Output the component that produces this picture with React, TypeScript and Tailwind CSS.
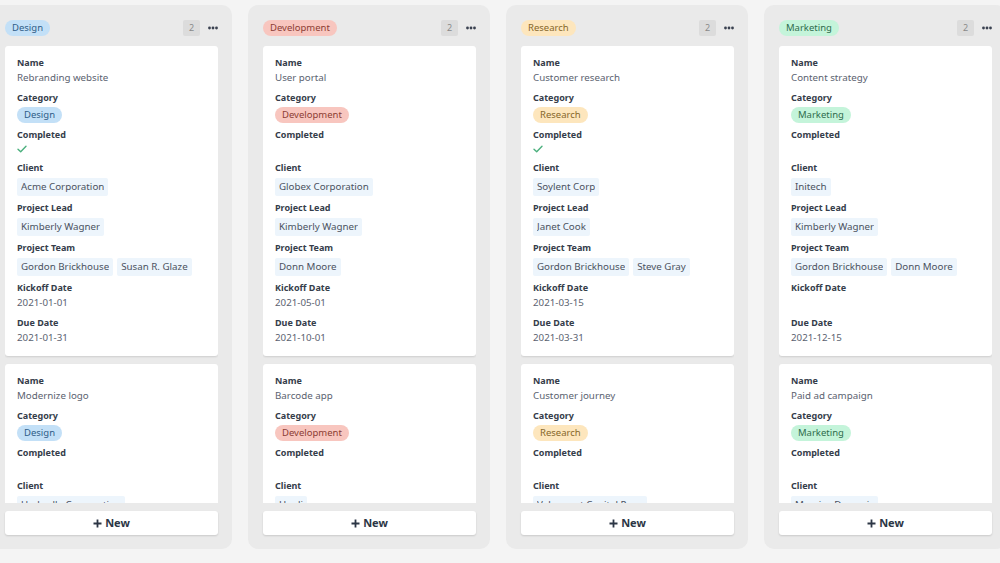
import React from 'react'

type Tone = 'blue' | 'red' | 'amber' | 'green'

interface Project {
    name: string
    completed: boolean
    client: string
    lead?: string
    team?: string[]
    kickoff?: string
    due?: string
}

interface Group {
    title: string
    tone: Tone
    projects: Project[]
}

const pillTone: Record<Tone, string> = {
    blue: 'bg-[#c3e0f7] text-[#2f5d87]',
    red: 'bg-[#f8c6bf] text-[#8c3d33]',
    amber: 'bg-[#fde6bd] text-[#86662a]',
    green: 'bg-[#c4f4da] text-[#2e6c4d]',
}

const groups: Group[] = [
    {
        title: 'Design',
        tone: 'blue',
        projects: [
            {
                name: 'Rebranding website',
                completed: true,
                client: 'Acme Corporation',
                lead: 'Kimberly Wagner',
                team: ['Gordon Brickhouse', 'Susan R. Glaze'],
                kickoff: '2021-01-01',
                due: '2021-01-31',
            },
            { name: 'Modernize logo', completed: false, client: 'Umbrella Corporation' },
        ],
    },
    {
        title: 'Development',
        tone: 'red',
        projects: [
            {
                name: 'User portal',
                completed: false,
                client: 'Globex Corporation',
                lead: 'Kimberly Wagner',
                team: ['Donn Moore'],
                kickoff: '2021-05-01',
                due: '2021-10-01',
            },
            { name: 'Barcode app', completed: false, client: 'Hooli' },
        ],
    },
    {
        title: 'Research',
        tone: 'amber',
        projects: [
            {
                name: 'Customer research',
                completed: true,
                client: 'Soylent Corp',
                lead: 'Janet Cook',
                team: ['Gordon Brickhouse', 'Steve Gray'],
                kickoff: '2021-03-15',
                due: '2021-03-31',
            },
            { name: 'Customer journey', completed: false, client: 'Vehement Capital Partners' },
        ],
    },
    {
        title: 'Marketing',
        tone: 'green',
        projects: [
            {
                name: 'Content strategy',
                completed: false,
                client: 'Initech',
                lead: 'Kimberly Wagner',
                team: ['Gordon Brickhouse', 'Donn Moore'],
                due: '2021-12-15',
            },
            { name: 'Paid ad campaign', completed: false, client: 'Massive Dynamic' },
        ],
    },
]

function Pill({ tone, children }: { tone: Tone; children: React.ReactNode }) {
    return (
        <span className={`inline-flex h-[16px] items-center rounded-full px-[7px] text-[9.5px] leading-none ${pillTone[tone]}`}>
            {children}
        </span>
    )
}

function Chip({ children }: { children: React.ReactNode }) {
    return (
        <span className="inline-flex h-[18px] max-w-[114px] items-center rounded-[2px] bg-[#edf5fc] px-[4px] text-[9.75px] text-[#4b5261]">
            <span className="truncate">{children}</span>
        </span>
    )
}

function Field({ label, children }: { label: string; children?: React.ReactNode }) {
    return (
        <div className="flex flex-col">
            <div className="h-[14px] text-[9px] font-bold leading-[14px] text-[#353d4a]">{label}</div>
            {children}
        </div>
    )
}

function Text({ children }: { children?: React.ReactNode }) {
    return <div className="h-[16px] text-[9.75px] leading-[16px] text-[#5b6270]">{children}</div>
}

function Check() {
    return (
        <div className="flex h-[14px] items-center">
            <svg width="10" height="8" viewBox="0 0 10 8" fill="none">
                <path d="M1 4.2 3.7 6.8 9 1.2" stroke="#4cb07e" strokeWidth="1.4" strokeLinecap="round" strokeLinejoin="round" />
            </svg>
        </div>
    )
}

function Card({ project, tone, category }: { project: Project; tone: Tone; category: string }) {
    return (
        <div className="flex shrink-0 flex-col gap-[5px] rounded-[3px] bg-white px-[12px] pt-[10px] pb-[10px] shadow-[0_1px_2px_rgba(0,0,0,0.12)]">
            <Field label="Name">
                <Text>{project.name}</Text>
            </Field>
            <Field label="Category">
                <div className="mt-[2px] flex">
                    <Pill tone={tone}>{category}</Pill>
                </div>
            </Field>
            <Field label="Completed">
                {project.completed ? <Check /> : <div className="h-[14px]" />}
            </Field>
            <Field label="Client">
                <div className="mt-[3px] flex">
                    <Chip>{project.client}</Chip>
                </div>
            </Field>
            <Field label="Project Lead">
                <div className="mt-[3px] flex">
                    <Chip>{project.lead}</Chip>
                </div>
            </Field>
            <Field label="Project Team">
                <div className="mt-[3px] flex gap-[4px]">
                    {project.team?.map(t => (
                        <Chip key={t}>{t}</Chip>
                    ))}
                </div>
            </Field>
            <Field label="Kickoff Date">
                <Text>{project.kickoff}</Text>
            </Field>
            <Field label="Due Date">
                <Text>{project.due}</Text>
            </Field>
        </div>
    )
}

function Column({ group }: { group: Group }) {
    return (
        <div className="mt-[5px] flex h-[544px] w-[242px] shrink-0 flex-col rounded-[10px] bg-[#eaeaea] pr-[14px] pb-[14px] pl-[15px]">
            {/* header */}
            <div className="flex items-center pt-[15px] pb-[10px]">
                <Pill tone={group.tone}>{group.title}</Pill>
                <div className="ml-auto flex h-[16px] w-[17px] items-center justify-center rounded-[2px] bg-[#dcdcdc] text-[9px] text-[#8a8a8a]">
                    {group.projects.length}
                </div>
                <svg className="ml-[8px]" width="10" height="4" viewBox="0 0 10 4">
                    <circle cx="1.5" cy="2" r="1.4" fill="#3a4150" />
                    <circle cx="5" cy="2" r="1.4" fill="#3a4150" />
                    <circle cx="8.5" cy="2" r="1.4" fill="#3a4150" />
                </svg>
            </div>

            {/* cards */}
            <div className="flex min-h-0 flex-1 flex-col gap-[8px] overflow-hidden">
                {group.projects.map(p => (
                    <Card key={p.name} project={p} tone={group.tone} category={group.title} />
                ))}
            </div>

            <button className="mt-[8px] flex h-[24px] shrink-0 items-center justify-center gap-[3px] rounded-[3px] bg-white text-[11px] font-bold text-[#2c3645] shadow-[0_1px_2px_rgba(0,0,0,0.14)]">
                <svg width="9" height="9" viewBox="0 0 9 9">
                    <path d="M4.5 0.5v8M0.5 4.5h8" stroke="#2c3645" strokeWidth="1.8" />
                </svg>
                New
            </button>
        </div>
    )
}

export default function App() {
    return (
        <div className="h-[563px] w-[1000px] overflow-hidden bg-[#f4f4f4] font-['Noto_Sans',sans-serif]">
            <div className="-ml-[10px] flex gap-[16px]">
                {groups.map(g => (
                    <Column key={g.title} group={g} />
                ))}
            </div>
        </div>
    )
}
